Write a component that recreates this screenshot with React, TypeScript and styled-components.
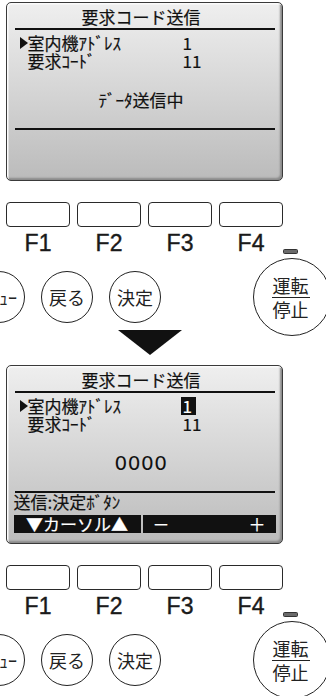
import React from 'react';
import styled, { createGlobalStyle } from 'styled-components';

const GlobalStyle = createGlobalStyle`
  html, body {
    margin: 0;
    padding: 0;
    background: #fff;
  }
  body {
    font-family: "Noto Sans CJK JP", sans-serif;
    color: #111;
  }
`;

const Page = styled.div`
  width: 326px;
  height: 696px;
  overflow: hidden;
  padding-top: 2px;
  box-sizing: border-box;
`;

const Screen = styled.div`
  margin-left: 6px;
  width: 277px;
  height: 179px;
  box-sizing: border-box;
  border: 1.5px solid #3a3a3a;
  border-radius: 5px;
  background: linear-gradient(#efefef, #bbbbbb);
  box-shadow: inset 1.5px 1.5px 0 #fbfbfb, inset -2px -2px 2px #8a8a8a;
  padding: 3px 7.5px 0;
  display: flex;
  flex-direction: column;
  font-size: 17px;
  -webkit-text-stroke: 0.2px #111;
`;

const Title = styled.div`
  height: 22px;
  line-height: 22px;
  text-align: center;
  padding-right: 7px;
  border-bottom: 2px solid #111;
`;

const Rows = styled.div`
  margin-top: 3.5px;
  display: flex;
  flex-direction: column;
`;

const Row = styled.div`
  display: flex;
  height: 18px;
  line-height: 18px;
  padding-left: 5px;
`;

const Marker = styled.span<{ $on: boolean }>`
  width: 8px;
  flex: none;
  display: flex;
  align-items: center;
  &::before {
    content: '';
    display: ${p => (p.$on ? 'block' : 'none')};
    border-left: 8px solid #111;
    border-top: 6px solid transparent;
    border-bottom: 6px solid transparent;
  }
`;

const Label = styled.span`
  width: 155px;
  flex: none;
`;

const Value = styled.span<{ $selected?: boolean }>`
  display: inline-block;
  ${p =>
    p.$selected
      ? `background: #111; color: #fff; -webkit-text-stroke: 0.2px #fff; padding: 0 4px 0 2px; margin-left: -2px;`
      : ''}
`;

const Middle = styled.div`
  height: 56px;
  padding-top: 2px;
  border-bottom: 2px solid #111;
  display: flex;
  align-items: center;
  justify-content: center;
  padding-right: 7px;
`;

const Code = styled.span`
  font-family: "DejaVu Sans", sans-serif;
  font-size: 20px;
  letter-spacing: 0.5px;
  -webkit-text-stroke: 0;
`;

const Hint = styled.div`
  margin-left: -1px;
  height: 18px;
  line-height: 18px;
`;

const SoftKeys = styled.div`
  margin: 4px -1px 0;
  display: grid;
  grid-template-columns: 127px 1fr;
  column-gap: 2px;
  height: 18px;
`;

const SoftKey = styled.div<{ $spread?: boolean }>`
  background: #111;
  color: #fff;
  -webkit-text-stroke: 0.2px #fff;
  line-height: 18px;
  display: flex;
  justify-content: ${p => (p.$spread ? 'space-between' : 'center')};
  padding: ${p => (p.$spread ? '0 10px' : '0')};
`;

const FKeys = styled.div`
  margin: 21px 0 0 6px;
  width: 277px;
  display: grid;
  grid-template-columns: repeat(4, 1fr);
  column-gap: 7px;
`;

const FKey = styled.div`
  height: 25px;
  box-sizing: border-box;
  border: 1.5px solid #2a2a2a;
  border-radius: 4px;
  background: #fff;
`;

const LabelRow = styled.div`
  margin-top: 4px;
  height: 25px;
  display: flex;
  align-items: flex-end;
`;

const FLabels = styled.div`
  margin-left: 6px;
  width: 277px;
  display: grid;
  grid-template-columns: repeat(4, 1fr);
  column-gap: 7px;
  font-family: "Liberation Sans", Arial, sans-serif;
  font-size: 23px;
  line-height: 25px;
  text-align: center;
  color: #1a1a1a;
  -webkit-text-stroke: 0.4px #1a1a1a;
`;

const Led = styled.div`
  width: 15px;
  height: 5px;
  margin-bottom: 2px;
  box-sizing: border-box;
  background: #6a6a6a;
  border: 1px solid #333;
  border-radius: 1.5px;
`;

const Controls = styled.div`
  margin-top: 2px;
  height: 78px;
  display: flex;
  align-items: center;
  gap: 16px;
`;

const RoundKey = styled.div<{ $first?: boolean }>`
  flex: none;
  width: 52px;
  height: 52px;
  margin-left: ${p => (p.$first ? '-27px' : '0')};
  box-sizing: border-box;
  border: 1.5px solid #222;
  border-radius: 50%;
  background: #fff;
  display: flex;
  align-items: center;
  justify-content: center;
  font-size: 18px;
  color: #222;
`;

const PowerKey = styled.div`
  flex: none;
  margin-left: auto;
  margin-right: -5px;
  width: 78px;
  height: 78px;
  box-sizing: border-box;
  border: 1.5px solid #222;
  border-radius: 50%;
  background: #fff;
  display: flex;
  flex-direction: column;
  align-items: center;
  justify-content: center;
  font-size: 18px;
  line-height: 20px;
  color: #222;
  padding-right: 3px;
`;

const Divider = styled.div`
  width: 38px;
  height: 1.5px;
  margin: 2px 0 1px;
  background: #222;
`;

const Arrow = styled.div`
  margin: -6px 0 10px 118px;
  width: 0;
  height: 0;
  border-left: 32.5px solid transparent;
  border-right: 32.5px solid transparent;
  border-top: 25px solid #111;
`;

type PanelProps = {
  selected?: boolean;
  code?: string;
  message?: string;
  editing?: boolean;
};

const rows = [
  { label: '室内機ｱﾄﾞﾚｽ', value: '1' },
  { label: '要求ｺｰﾄﾞ', value: '11' },
];

const Panel: React.FC<PanelProps> = ({ selected, code, message, editing }) => (
  <>
    <Screen>
      <Title>要求コード送信</Title>
      <Rows>
        {rows.map((r, i) => (
          <Row key={r.label}>
            <Marker $on={i === 0} />
            <Label>{r.label}</Label>
            <Value $selected={selected && i === 0}>{r.value}</Value>
          </Row>
        ))}
      </Rows>
      <Middle>{code ? <Code>{code}</Code> : message}</Middle>
      {editing && (
        <>
          <Hint>送信:決定ﾎﾞﾀﾝ</Hint>
          <SoftKeys>
            <SoftKey>▼カーソル▲</SoftKey>
            <SoftKey $spread>
              <span>－</span>
              <span>＋</span>
            </SoftKey>
          </SoftKeys>
        </>
      )}
    </Screen>
    <FKeys>
      {[1, 2, 3, 4].map(n => (
        <FKey key={n} />
      ))}
    </FKeys>
    <LabelRow>
      <FLabels>
        {['F1', 'F2', 'F3', 'F4'].map(f => (
          <span key={f}>{f}</span>
        ))}
      </FLabels>
      <Led />
    </LabelRow>
    <Controls>
      <RoundKey $first>ﾒﾆｭｰ</RoundKey>
      <RoundKey>戻る</RoundKey>
      <RoundKey>決定</RoundKey>
      <PowerKey>
        <span>運転</span>
        <Divider />
        <span>停止</span>
      </PowerKey>
    </Controls>
  </>
);

const App: React.FC = () => (
  <Page>
    <GlobalStyle />
    <Panel message="ﾃﾞｰﾀ送信中" />
    <Arrow />
    <Panel selected code="0000" editing />
  </Page>
);

export default App;
